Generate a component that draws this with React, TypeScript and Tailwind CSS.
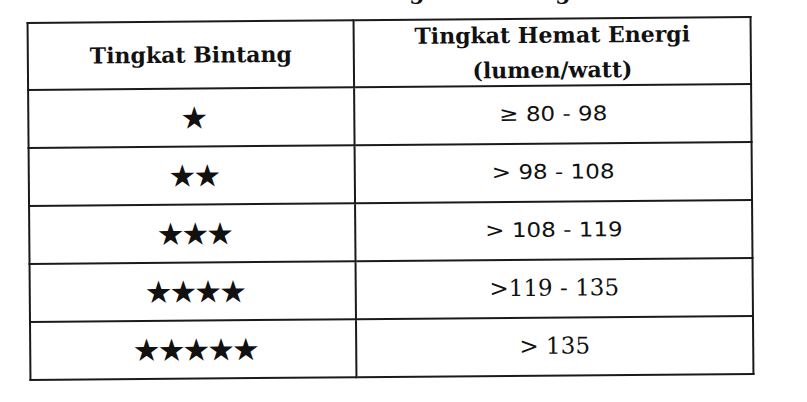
import React from "react";

const rows: { stars: string; value: string; serif: boolean }[] = [
  { stars: "★", value: "≥ 80 - 98", serif: false },
  { stars: "★★", value: "> 98 - 108", serif: false },
  { stars: "★★★", value: "> 108 - 119", serif: false },
  { stars: "★★★★", value: ">119 - 135", serif: true },
  { stars: "★★★★★", value: "> 135", serif: true },
];

export default function App() {
  return (
    <div className="w-[807px] h-[402px] bg-white overflow-hidden text-[#111]">
      <div
        className="mt-[-21px] h-[24px] leading-[24px] pl-[264px] text-[22px] font-bold whitespace-nowrap"
        style={{ fontFamily: '"DejaVu Serif", serif' }}
      >
        Tabel 3. Tingkat Bintang
      </div>
      <div className="mt-[16px] ml-[28px] w-[723px] rotate-[-0.47deg]">
        <table className="w-[723px] border-collapse table-fixed">
          <colgroup>
            <col className="w-[326px]" />
            <col className="w-[397px]" />
          </colgroup>
          <thead>
            <tr className="h-[67px]">
              <th
                className="border-2 border-[#1a1a1a] text-[22px] font-bold text-center align-middle p-0"
                style={{ fontFamily: '"DejaVu Serif", serif' }}
              >
                Tingkat Bintang
              </th>
              <th
                className="border-2 border-[#1a1a1a] text-[22px] font-bold text-center align-middle p-0"
                style={{ fontFamily: '"DejaVu Serif", serif' }}
              >
                <div className="h-[63px] flex flex-col justify-center leading-[35px]">
                  <span>Tingkat Hemat Energi</span>
                  <span>(lumen/watt)</span>
                </div>
              </th>
            </tr>
          </thead>
          <tbody>
            {rows.map((r) => (
              <tr key={r.value} className="h-[58px]">
                <td
                  className="border-2 border-[#1a1a1a] text-center align-middle p-0 text-[31px] leading-none tracking-[-3px]"
                  style={{ fontFamily: '"DejaVu Sans", sans-serif' }}
                >
                  <span className="inline-block pl-[3px]">{r.stars}</span>
                </td>
                <td className="border-2 border-[#1a1a1a] text-center align-middle p-0">
                  {r.serif ? (
                    <span
                      className="text-[23px] leading-none"
                      style={{ fontFamily: '"DejaVu Serif", serif' }}
                    >
                      {r.value}
                    </span>
                  ) : (
                    <span
                      className="inline-block scale-x-[1.15] text-[20px] leading-none"
                      style={{ fontFamily: '"DejaVu Sans", sans-serif' }}
                    >
                      {r.value}
                    </span>
                  )}
                </td>
              </tr>
            ))}
          </tbody>
        </table>
      </div>
    </div>
  );
}
